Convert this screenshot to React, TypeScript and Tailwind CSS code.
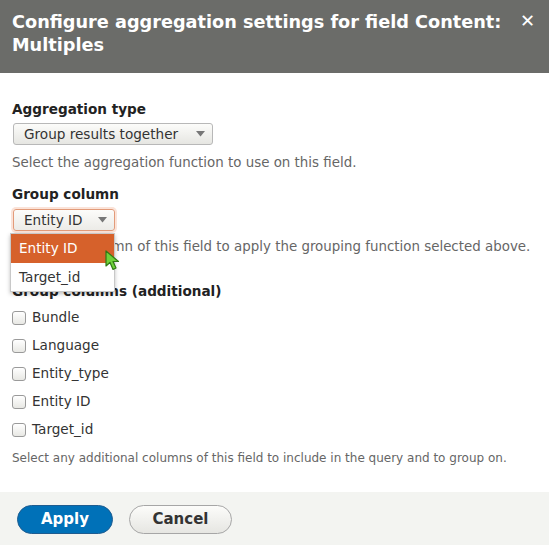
import React from 'react';

const font = { fontFamily: '"DejaVu Sans", Verdana, sans-serif' };

const Caret: React.FC<{ gap: string }> = ({ gap }) => (
    <svg width="9" height="6" viewBox="0 0 9 6" className={gap}>
        <path d="M0 0 L9 0 L4.5 5.5 Z" fill="#777" />
    </svg>
);

const Checkbox: React.FC<{ label: string }> = ({ label }) => (
    <label className="flex items-center h-[28px] gap-[6px]">
        <span className="block w-[14px] h-[14px] rounded-[3px] border border-[#9a9a9a] bg-gradient-to-b from-[#ffffff] to-[#e8e8e4]" />
        <span className="text-[13.6px] text-[#333]">{label}</span>
    </label>
);

const App: React.FC = () => {
    const columns = ['Bundle', 'Language', 'Entity_type', 'Entity ID', 'Target_id'];

    return (
        <div className="w-[549px] h-[545px] bg-white flex flex-col overflow-hidden" style={font}>
            <header className="h-[73px] shrink-0 bg-[#6b6c69] flex items-start justify-between pl-[12px] pr-[14px] pt-[11px]">
                <h1 className="text-[17.7px] leading-[23px] font-bold text-white">
                    Configure aggregation settings for field Content:<br />Multiples
                </h1>
                <span className="text-white text-[18px] font-bold leading-[23px] mt-[-2px]">✕</span>
            </header>

            <div className="flex-1 pl-[12px] pr-[11px] pt-[27px]">
                <div>
                    <p className="text-[13.6px] leading-[18px] font-bold text-[#222]">Aggregation type</p>
                    <div className="mt-[5px] inline-flex items-center h-[22px] pl-[10px] pr-[7px] ml-[1px] border border-[#b8b8b8] rounded-[3px] bg-gradient-to-b from-[#fcfcfa] to-[#e6e6e2] text-[13.6px] text-[#333]">
                        Group results together
                        <Caret gap="ml-[18px]" />
                    </div>
                    <p className="mt-[8px] text-[13.4px] leading-[18px] text-[#666] whitespace-nowrap">Select the aggregation function to use on this field.</p>
                </div>

                <div className="mt-[13px] relative">
                    <p className="text-[13.6px] leading-[18px] font-bold text-[#222]">Group column</p>
                    <div className="mt-[6px] inline-flex items-center h-[22px] pl-[10px] pr-[7px] ml-[1px] border border-[#e29b7a] rounded-[3px] bg-gradient-to-b from-[#fcfcfa] to-[#ecebe7] text-[13.6px] text-[#333] shadow-[0_0_0_2px_#fbe3d8]">
                        Entity ID
                        <Caret gap="ml-[16px]" />
                    </div>
                    <p className="mt-[6px] text-[13.4px] leading-[18px] text-[#666] whitespace-nowrap">Select the column of this field to apply the grouping function selected above.</p>

                    <div className="absolute left-[-2px] top-[48px] w-[105px] bg-white border border-[#c8c8c8] shadow-[0_2px_4px_rgba(0,0,0,0.25)] text-[13.6px]">
                        <div className="h-[29px] flex items-center pl-[8px] bg-[#d6612b] text-white">Entity ID</div>
                        <div className="h-[28px] flex items-center pl-[8px] text-[#333]">Target_id</div>
                    </div>
                    <svg className="absolute left-[93px] top-[65px]" width="16" height="22" viewBox="0 0 16 22">
                        <path d="M1 1 L1 16 L5 12.5 L8 19.5 L11 18 L8 11.5 L13.5 11.5 Z" fill="#6fd23a" stroke="#2f7a14" strokeWidth="1.2" strokeLinejoin="round" />
                    </svg>
                </div>

                <div className="mt-[26px]">
                    <p className="text-[13.6px] leading-[18px] font-bold text-[#222]">Group columns (additional)</p>
                    <div className="mt-[4px] flex flex-col">
                        {columns.map(c => <Checkbox key={c} label={c} />)}
                    </div>
                    <p className="mt-[6px] text-[12px] leading-[16px] text-[#666] whitespace-nowrap">Select any additional columns of this field to include in the query and to group on.</p>
                </div>
            </div>

            <footer className="h-[53px] shrink-0 bg-[#f3f4f1] flex items-center gap-[16px] pl-[17px] pt-[2px]">
                <button className="h-[29px] w-[96px] rounded-full bg-[#0071b8] border border-[#1e5c90] text-white font-bold text-[15px]">Apply</button>
                <button className="h-[29px] w-[103px] rounded-full bg-gradient-to-b from-[#fcfcfa] to-[#e6e6e2] border border-[#a6a6a6] text-[#333] font-bold text-[15px]">Cancel</button>
            </footer>
        </div>
    );
};

export default App;
